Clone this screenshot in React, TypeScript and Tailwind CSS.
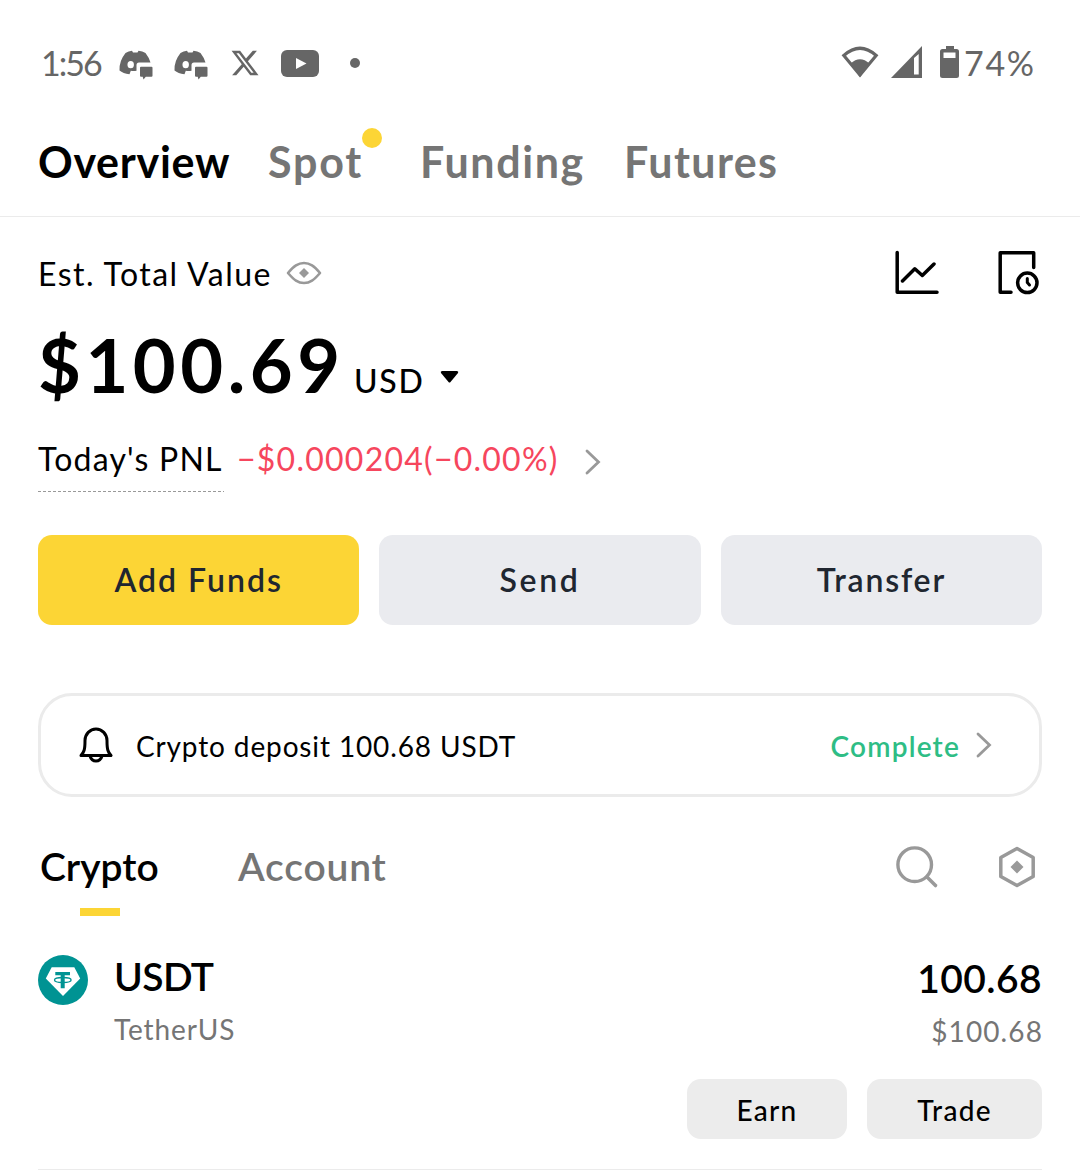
import React from 'react';
import { FaXTwitter } from 'react-icons/fa6';

const tabs = [
  { name: 'Overview', box: 'ml-[38px] w-[230px] text-black tracking-[0.7px]' },
  { name: 'Spot', box: 'w-[152px] text-[#757575] tracking-[1.8px]', dot: true },
  { name: 'Funding', box: 'w-[204px] text-[#757575] tracking-[1.6px]' },
  { name: 'Futures', box: 'text-[#757575] tracking-[1.4px]' },
];

const actions = [
  { name: 'Add Funds', style: 'bg-[#fcd535] text-[#202630] tracking-[2px]' },
  { name: 'Send', style: 'bg-[#eaebef] text-[#202630] tracking-[2.6px]' },
  { name: 'Transfer', style: 'bg-[#eaebef] text-[#202630] tracking-[1.8px]' },
];

function DiscordIcon({ className }: { className?: string }) {
  return (
    <svg className={className} width="34" height="30" viewBox="0 0 34 30">
      <path
        d="M6.500 3Q9.500 1 13 .800L14 2.600H18.500L19.500 .800Q23.500 1 26.500 3Q30 7.500 31.500 12.500H20Q17.500 12.500 17.500 15V20.800Q14.500 21.300 11.800 20.800L10.500 24.300Q4 23.500 .500 20.500Q0 11 6.500 3Z"
        fill="#666666"
      />
      <ellipse cx="11.700" cy="14.700" rx="3.200" ry="3.600" fill="#fff" />
      <path
        d="M22 16.800H32.500Q33.500 16.800 33.500 17.800V25.700Q33.500 26.700 32.500 26.700H26.800L24.500 29.500L23.700 26.700H22Q21 26.700 21 25.700V17.800Q21 16.800 22 16.800Z"
        fill="#666666"
      />
    </svg>
  );
}

function Chevron({ className }: { className?: string }) {
  return (
    <svg className={className} width="16" height="26" viewBox="0 0 16 26" fill="none">
      <path d="M2 2L13.500 13L2 24" stroke="#999999" strokeWidth="2.800" strokeLinecap="round" />
    </svg>
  );
}

function StatusBar() {
  return (
    <div className="flex h-[104px] items-center pt-5 text-[34px] text-[#666666]">
      <span className="ml-[41px] w-[78px] tracking-[-2px]">1:56</span>
      <DiscordIcon className="mt-[6px]" />
      <DiscordIcon className="ml-[21px] mt-[6px]" />
      <FaXTwitter className="ml-[22px] mt-[2px] h-[30px] w-[30px]" />
      <svg className="ml-[21px] mt-[3px]" width="38" height="27" viewBox="0 0 38 27">
        <rect width="38" height="27" rx="6" fill="#666666" />
        <path d="M15 8L25.500 13.500L15 19Z" fill="#fff" />
      </svg>
      <span className="ml-[31px] mt-[2px] h-[10px] w-[10px] rounded-full bg-[#666666]" />

      <svg className="ml-auto" width="38" height="32" viewBox="0 0 38 32" fill="none">
        <path d="M2.800 9.500Q19 -5 35.200 9.500L19 29Z" stroke="#666666" strokeWidth="3.200" />
        <path d="M9.500 17.500Q19 9 28.500 17.500L19 31Z" fill="#666666" />
      </svg>
      <svg className="ml-[12px]" width="32" height="32" viewBox="0 0 32 32">
        <path d="M0 32L31 0V32ZM23 12V28.500H27.700V8Z" fill="#666666" fillRule="evenodd" />
      </svg>
      <svg className="ml-[17px]" width="19" height="32" viewBox="0 0 19 32">
        <path
          d="M6 0H14V3H16.500Q19 3 19 5.500V29.500Q19 32 16.500 32H2.500Q0 32 0 29.500V5.500Q0 3 2.500 3H6ZM3.500 6.500V12H15.500V6.500Z"
          fill="#666666"
          fillRule="evenodd"
        />
      </svg>
      <span className="ml-[5px] mr-[44px] w-[72px] tracking-[1.7px]">74%</span>
    </div>
  );
}

function TopTabs() {
  return (
    <div className="flex h-[113px] items-center border-b border-[#ebebeb] pt-1 text-[43px] font-bold">
      {tabs.map((tab) => (
        <div key={tab.name} className={tab.box}>
          <span className="relative">
            {tab.name}
            {tab.dot && (
              <span className="absolute -right-[19px] -top-[8px] h-5 w-5 rounded-full bg-[#fcd535]" />
            )}
          </span>
        </div>
      ))}
    </div>
  );
}

function Balance() {
  return (
    <div>
      <div className="flex h-[111px] items-center">
        <span className="w-[248px] pt-[2px] text-[32px] tracking-[1.45px]">Est. Total Value</span>
        <svg width="36" height="24" viewBox="0 0 36 24" fill="none">
          <path
            d="M2 12C8 5 12 2 18 2S28 5 34 12C28 19 24 22 18 22S8 19 2 12Z"
            stroke="#999999"
            strokeWidth="2.600"
            strokeLinejoin="round"
          />
          <path d="M18 7L23 12L18 17L13 12Z" fill="#999999" />
        </svg>
        <svg className="ml-auto" width="46" height="46" viewBox="0 0 46 46" fill="none">
          <path
            d="M3.200 2.500V42.200H43M8.500 31L20.800 18.800L28.300 25.500L40 14"
            stroke="#000"
            strokeWidth="3.500"
            strokeLinecap="round"
            strokeLinejoin="round"
          />
        </svg>
        <svg className="ml-[57px] mr-px" width="44" height="46" viewBox="0 0 44 46" fill="none">
          <path
            d="M14 42.200H3.200V2.800H36.700V17.500"
            stroke="#000"
            strokeWidth="3.500"
            strokeLinecap="round"
            strokeLinejoin="round"
          />
          <circle cx="30.300" cy="32.800" r="9.700" stroke="#000" strokeWidth="3.500" />
          <path d="M30.300 28.500V32.500L32.500 35" stroke="#000" strokeWidth="3" strokeLinecap="round" />
        </svg>
      </div>

      <div className="flex h-[73px] items-baseline leading-[73px]">
        <span className="w-[316px] text-[74px] font-bold tracking-[4.5px]">$100.69</span>
        <span className="w-[86px] text-[32px] font-medium leading-none tracking-[1.7px]">USD</span>
        <svg className="mt-[43px] self-start" width="19" height="12" viewBox="0 0 19 12">
          <path d="M2 0H17Q19 .500 18 2L10.500 11Q9.500 12 8.500 11L1 2Q0 .500 2 0Z" fill="#000" />
        </svg>
      </div>

      <div className="mt-[23px] flex h-[68px] items-start text-[32px] leading-[69px]">
        <span className="relative w-[199px] whitespace-nowrap tracking-[1.2px]">
          Today's PNL
          <svg className="absolute left-0 top-[67px]" width="186" height="1">
            <path d="M0 .500H186" stroke="#999999" strokeDasharray="3 2" />
          </svg>
        </span>
        <span className="w-[348px] whitespace-nowrap tracking-[1.25px] text-[#f6465d]">
          −$0.000204(−0.00%)
        </span>
        <Chevron className="mt-[25px]" />
      </div>
    </div>
  );
}

function App() {
  return (
    <div className="h-[1173px] w-[1080px] overflow-hidden bg-white font-['Lato',sans-serif] text-black">
      <StatusBar />
      <TopTabs />
      <div className="px-[38px]">
        <Balance />

        <div className="mt-[43px] grid grid-cols-3 gap-5">
          {actions.map((action) => (
            <button
              key={action.name}
              className={`h-[90px] rounded-[14px] text-[32px] font-semibold ${action.style}`}
            >
              {action.name}
            </button>
          ))}
        </div>

        <div className="mt-[68px] flex h-[104px] items-center rounded-[34px] border-[3px] border-[#ebebeb] pl-[38px] pr-[47px] text-[28px]">
          <svg width="34" height="36" viewBox="0 0 34 36" fill="none">
            <path
              d="M2 28.500C5 25 6 23 6 13.500A11 11.500 0 0 1 28 13.500C28 23 29 25 32 28.500Z"
              stroke="#000"
              strokeWidth="3"
              strokeLinejoin="round"
            />
            <path d="M11 29Q12.500 34 17 34T23 29" stroke="#000" strokeWidth="3" />
          </svg>
          <span className="ml-[23px] pt-[2px] tracking-[0.87px]">Crypto deposit 100.68 USDT</span>
          <span className="ml-auto mr-[16px] pt-[2px] font-semibold tracking-[1.2px] text-[#2ebd85]">
            Complete
          </span>
          <Chevron />
        </div>

        <div className="mt-[29px] flex h-[90px] items-start text-[39px] font-semibold leading-[80px]">
          <div className="relative w-[200px] pl-[2px]">
            Crypto
            <span className="absolute left-[42px] top-[82px] h-2 w-10 bg-[#fcd535]" />
          </div>
          <span className="tracking-[0.8px] text-[#757575]">Account</span>
          <svg className="ml-auto mt-[19px]" width="44" height="44" viewBox="0 0 44 44" fill="none">
            <circle cx="19.700" cy="19.700" r="16.800" stroke="#999999" strokeWidth="3.400" />
            <path d="M32 32L40.500 40.500" stroke="#999999" strokeWidth="3.600" strokeLinecap="round" />
          </svg>
          <svg className="ml-[59px] mr-[6px] mt-[20px]" width="38" height="42" viewBox="0 0 38 42" fill="none">
            <path
              d="M19 2.500L35.200 11.500V30.500L19 39.500L2.800 30.500V11.500Z"
              stroke="#999999"
              strokeWidth="3.500"
              strokeLinejoin="round"
            />
            <path d="M19 14.500L25.500 21L19 27.500L12.500 21Z" fill="#999999" />
          </svg>
        </div>

        <div className="mt-[39px] flex h-[95px]">
          <svg width="50" height="50" viewBox="0 0 50 50">
            <circle cx="25" cy="25" r="25" fill="#009393" />
            <path d="M13.700 12.300H36.300L42.200 23.500L25 41L7.800 23.500Z" fill="#fff" />
            <path d="M17.300 17H32V20.300H26.700V33.300H22.700V20.300H17.300Z" fill="#009393" />
            <ellipse cx="24.800" cy="25" rx="8.300" ry="2.500" fill="none" stroke="#009393" strokeWidth="1.300" />
          </svg>
          <div className="ml-[26px] pt-px">
            <p className="text-[39px] font-semibold leading-10 tracking-[-0.6px]">USDT</p>
            <p className="mt-[13px] text-[28px] leading-10 tracking-[0.9px] text-[#757575]">TetherUS</p>
          </div>
          <div className="ml-auto pt-[3px] text-right">
            <p className="text-[39px] font-semibold leading-10 tracking-[0.4px]">100.68</p>
            <p className="-mr-px mt-[13px] text-[28px] leading-10 tracking-[1.1px] text-[#757575]">$100.68</p>
          </div>
        </div>

        <div className="mt-[29px] flex justify-end gap-5 text-[28px] font-medium tracking-[1.3px]">
          <button className="h-[60px] w-[160px] rounded-[14px] bg-[#ececec] pt-[2px]">Earn</button>
          <button className="h-[60px] w-[175px] rounded-[14px] bg-[#ececec] pt-[2px]">Trade</button>
        </div>
        <div className="mt-[30px] border-t border-[#ebebeb]" />
      </div>
    </div>
  );
}

export default App;
